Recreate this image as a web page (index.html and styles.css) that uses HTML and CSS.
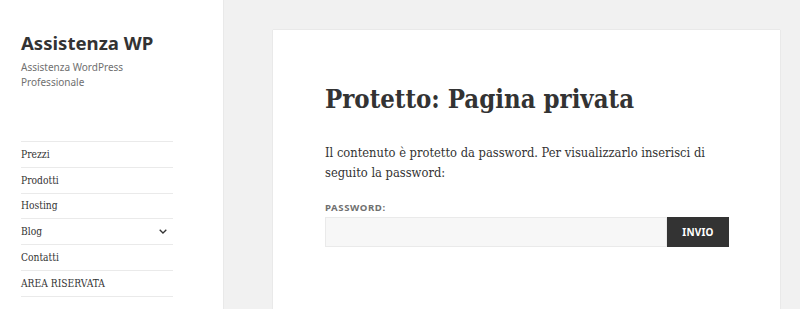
FILE: index.html
```html
<!DOCTYPE html>
<html lang="it">
<head>
<meta charset="utf-8">
<title>Protetto: Pagina privata – Assistenza WP</title>
<link rel="stylesheet" href="styles.css">
</head>
<body>
<div class="page">
  <aside class="sidebar">
    <header class="site-header">
      <p class="site-title">Assistenza WP</p>
      <p class="site-description">Assistenza WordPress Professionale</p>
    </header>
    <nav class="main-nav">
      <ul class="menu">
        <li class="menu-item">Prezzi</li>
        <li class="menu-item">Prodotti</li>
        <li class="menu-item">Hosting</li>
        <li class="menu-item has-children">Blog
          <svg class="chevron" viewBox="0 0 8 5" width="8" height="5" aria-hidden="true"><path d="M0.7 0.7 L4 4 L7.3 0.7" fill="none" stroke="#333" stroke-width="1.3"/></svg>
        </li>
        <li class="menu-item">Contatti</li>
        <li class="menu-item">AREA RISERVATA</li>
      </ul>
    </nav>
  </aside>
  <main class="main">
    <article class="card">
      <h1 class="entry-title">Protetto: Pagina privata</h1>
      <p class="entry-text">Il contenuto è protetto da password. Per visualizzarlo inserisci di seguito la password:</p>
      <form class="pw-form">
        <label class="pw-label" for="pwd">Password:</label>
        <div class="pw-row">
          <input class="pw-input" id="pwd" type="password">
          <button class="pw-submit" type="button">Invio</button>
        </div>
      </form>
    </article>
  </main>
</div>
</body>
</html>
```
FILE: styles.css
```css
html, body {
  margin: 0;
  padding: 0;
}
body {
  background: #f1f1f1;
  font-family: "DejaVu Serif Condensed", "DejaVu Serif", "Liberation Serif", serif;
  color: #333;
  height: 309px;
  overflow: hidden;
}
.page {
  display: flex;
  min-height: 309px;
}
.sidebar {
  width: 223px;
  flex: none;
  box-sizing: border-box;
  background: #fff;
  box-shadow: 0 0 1px rgba(0, 0, 0, 0.2);
  padding: 30px 50px 0 21px;
  min-height: 309px;
}
.site-title {
  margin: 0;
  font-family: "Noto Sans", "Open Sans", sans-serif;
  font-weight: 700;
  font-size: 18.6px;
  line-height: 26px;
  color: #333;
}
.site-description {
  margin: 4px 0 0;
  font-family: "Noto Sans", "Open Sans", sans-serif;
  font-size: 10px;
  line-height: 15px;
  color: #707070;
  width: 120px;
}
.main-nav {
  margin-top: 51px;
}
.menu {
  list-style: none;
  margin: 0;
  padding: 0;
  border-top: 1px solid #eaeaea;
}
.menu-item {
  display: flex;
  align-items: center;
  justify-content: space-between;
  height: 24.8px;
  border-bottom: 1px solid #eaeaea;
  font-size: 10.2px;
  color: #333;
}
.chevron {
  margin-right: 6px;
}
.main {
  flex: 1;
  padding: 30px 20px 0 50px;
}
.card {
  background: #fff;
  box-shadow: 0 0 1px rgba(0, 0, 0, 0.2);
  padding: 52px 51px 60px 52px;
  min-height: 400px;
}
.entry-title {
  margin: 0;
  font-weight: 700;
  font-size: 25.5px;
  line-height: 34px;
  color: #333;
}
.entry-text {
  margin: 27px 0 0;
  font-size: 12.8px;
  line-height: 19.5px;
  color: #333;
}
.pw-form {
  margin-top: 20px;
}
.pw-label {
  display: block;
  font-family: "Noto Sans", "Open Sans", sans-serif;
  font-weight: 700;
  font-size: 9.6px;
  letter-spacing: 0.06em;
  text-transform: uppercase;
  color: #707070;
  line-height: 12px;
  margin-bottom: 3px;
}
.pw-row {
  display: flex;
  height: 30px;
}
.pw-input {
  flex: 1;
  margin: 0;
  box-sizing: border-box;
  height: 30px;
  background: #f7f7f7;
  border: 1px solid #eaeaea;
  outline: none;
}
.pw-submit {
  width: 62px;
  margin: 0;
  height: 30px;
  border: 0;
  background: #333;
  color: #fff;
  font-family: "Noto Sans", "Open Sans", sans-serif;
  font-weight: 700;
  font-size: 10px;
  text-transform: uppercase;
  letter-spacing: 0.02em;
}
```
